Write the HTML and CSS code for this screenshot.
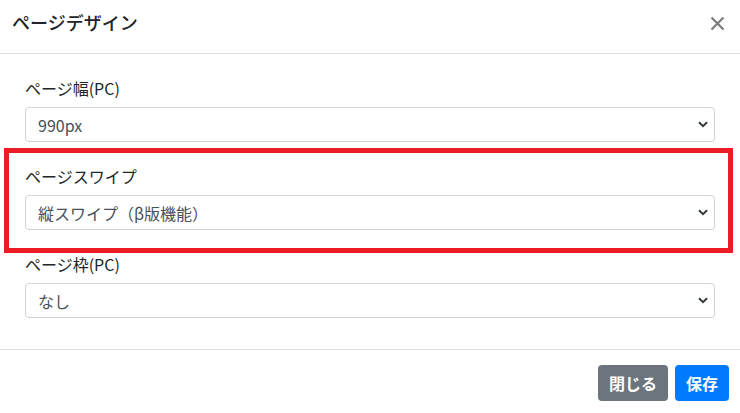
FILE: index.html
```html
<!DOCTYPE html>
<html lang="ja">
<head>
    <meta charset="UTF-8">
    <title>ページデザイン</title>
    <link rel="stylesheet" href="styles.css">
</head>
<body>
    <div class="modal">
        <div class="modal-header">
            <h5 class="modal-title">ページデザイン</h5>
            <button class="close" type="button" aria-label="Close">
                <svg width="15" height="15" viewBox="0 0 15 15">
                    <path d="M1.5 1.5L13.5 13.5M13.5 1.5L1.5 13.5" stroke="#7b7b7b" stroke-width="2.2" fill="none"/>
                </svg>
            </button>
        </div>

        <div class="modal-body">
            <div class="form-group">
                <label for="width">ページ幅(PC)</label>
                <select id="width" class="form-select">
                    <option>990px</option>
                </select>
            </div>
            <!-- 赤枠で囲った項目 -->
            <div class="form-group marked">
                <label for="swipe">ページスワイプ</label>
                <select id="swipe" class="form-select">
                    <option>縦スワイプ（β版機能）</option>
                </select>
            </div>
            <div class="form-group">
                <label for="frame">ページ枠(PC)</label>
                <select id="frame" class="form-select">
                    <option>なし</option>
                </select>
            </div>
        </div>

        <div class="modal-footer">
            <button class="btn btn-secondary" type="button">閉じる</button>
            <button class="btn btn-primary" type="button">保存</button>
        </div>
    </div>
</body>
</html>
```

FILE: styles.css
```css
body {
    margin: 0;
    background: #fff;
    font-family: "Noto Sans CJK JP", "Noto Sans", sans-serif;
    color: #212529;
}

.modal {
    width: 740px;
}

/*header*/
.modal-header {
    display: flex;
    justify-content: space-between;
    align-items: flex-start;
    padding: 9px 15px 18px 12px;
    border-bottom: 1px solid #dee2e6;
}
.modal-title {
    margin: 0;
    font-size: 18px;
    line-height: 26px;
    font-weight: 500;
}
.close {
    margin-top: 7px;
    padding: 0;
    border: 0;
    background: none;
    width: 15px;
    height: 15px;
    cursor: pointer;
}
.close svg {
    display: block;
}

/*body*/
.modal-body {
    padding: 22px 25px 9px;
}
.form-group {
    margin-bottom: 22px;
}
.form-group label {
    display: block;
    font-size: 16px;
    line-height: 24px;
    margin-bottom: 7px;
}
.form-select {
    display: block;
    width: 100%;
    height: 35px;
    padding: 0 30px 0 12px;
    font-family: inherit;
    font-size: 16px;
    color: #495057;
    background-color: #fff;
    background-image: url("data:image/svg+xml,%3csvg xmlns='http://www.w3.org/2000/svg' width='10' height='7' viewBox='0 0 10 7'%3e%3cpath d='M1 1.2l4 4 4-4' fill='none' stroke='%23343a40' stroke-width='2'/%3e%3c/svg%3e");
    background-repeat: no-repeat;
    background-position: right 6px center;
    background-size: 10px 7px;
    border: 1px solid #ced4da;
    border-radius: 4px;
    appearance: none;
    -webkit-appearance: none;
}

/*赤枠 注釈なので上に重ねる*/
.marked {
    position: relative;
}
.marked::after {
    content: "";
    position: absolute;
    top: -16px;
    left: -21px;
    right: -18px;
    bottom: -23px;
    border: 5px solid #ec1c24;
    pointer-events: none;
}

/*footer*/
.modal-footer {
    display: flex;
    justify-content: flex-end;
    gap: 7px;
    padding: 15px 11px 12px;
    border-top: 1px solid #dee2e6;
}
.btn {
    height: 36px;
    padding: 0 11px;
    border: 0;
    border-radius: 4px;
    font-family: inherit;
    font-size: 16px;
    font-weight: 700;
    color: #fff;
    cursor: pointer;
}
.btn-secondary {
    background: #6c757d;
}
.btn-primary {
    background: #007bff;
}
```
